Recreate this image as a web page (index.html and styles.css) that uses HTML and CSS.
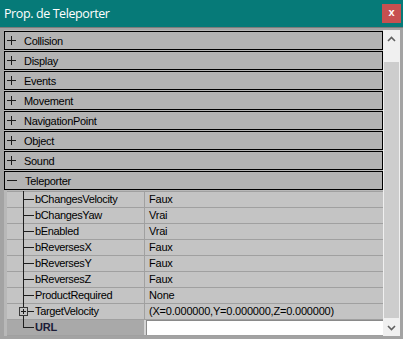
FILE: index.html
```html
<!DOCTYPE html>
<html>
<head>
<meta charset="utf-8">
<link rel="stylesheet" href="styles.css">
</head>
<body>
<div class="window">
  <div class="titlebar">
    <span class="title">Prop. de Teleporter</span>
    <div class="close">x</div>
  </div>
  <div class="frame">
    <div class="grid">
      <div class="cat"><svg class="pm" width="9" height="9" viewBox="0 0 9 9"><path d="M0 4.5H9M4.5 0V9" stroke="#1a1a1a" stroke-width="1"/></svg><span>Collision</span></div>
      <div class="cat"><svg class="pm" width="9" height="9" viewBox="0 0 9 9"><path d="M0 4.5H9M4.5 0V9" stroke="#1a1a1a" stroke-width="1"/></svg><span>Display</span></div>
      <div class="cat"><svg class="pm" width="9" height="9" viewBox="0 0 9 9"><path d="M0 4.5H9M4.5 0V9" stroke="#1a1a1a" stroke-width="1"/></svg><span>Events</span></div>
      <div class="cat"><svg class="pm" width="9" height="9" viewBox="0 0 9 9"><path d="M0 4.5H9M4.5 0V9" stroke="#1a1a1a" stroke-width="1"/></svg><span>Movement</span></div>
      <div class="cat"><svg class="pm" width="9" height="9" viewBox="0 0 9 9"><path d="M0 4.5H9M4.5 0V9" stroke="#1a1a1a" stroke-width="1"/></svg><span>NavigationPoint</span></div>
      <div class="cat"><svg class="pm" width="9" height="9" viewBox="0 0 9 9"><path d="M0 4.5H9M4.5 0V9" stroke="#1a1a1a" stroke-width="1"/></svg><span>Object</span></div>
      <div class="cat"><svg class="pm" width="9" height="9" viewBox="0 0 9 9"><path d="M0 4.5H9M4.5 0V9" stroke="#1a1a1a" stroke-width="1"/></svg><span>Sound</span></div>
      <div class="cat"><svg class="pm" width="10" height="9" viewBox="0 0 10 9"><path d="M0 4.5H10" stroke="#1a1a1a" stroke-width="1"/></svg><span>Teleporter</span></div>
      <div class="props">
        <div class="row"><div class="name">bChangesVelocity</div><div class="val">Faux</div></div>
        <div class="row"><div class="name">bChangesYaw</div><div class="val">Vrai</div></div>
        <div class="row"><div class="name">bEnabled</div><div class="val">Vrai</div></div>
        <div class="row"><div class="name">bReversesX</div><div class="val">Faux</div></div>
        <div class="row"><div class="name">bReversesY</div><div class="val">Faux</div></div>
        <div class="row"><div class="name">bReversesZ</div><div class="val">Faux</div></div>
        <div class="row"><div class="name">ProductRequired</div><div class="val">None</div></div>
        <div class="row"><div class="name expandable"><svg class="exp" width="9" height="9" viewBox="0 0 9 9"><rect x="0.5" y="0.5" width="8" height="8" fill="#c4c4c4" stroke="#3a3a3a"/><path d="M2 4.5H7M4.5 2V7" stroke="#1a1a1a"/></svg>TargetVelocity</div><div class="val">(X=0.000000,Y=0.000000,Z=0.000000)</div></div>
        <div class="row last sel"><div class="name">URL</div><div class="val edit"></div></div>
      </div>
    </div>
    <div class="scrollbar">
      <div class="sbtn"><svg width="9" height="6" viewBox="0 0 9 6"><path d="M1 5L4.5 1.5L8 5" fill="none" stroke="#606060" stroke-width="1.6"/></svg></div>
      <div class="sgap"></div>
      <div class="thumb"></div>
      <div class="sbtn"><svg width="9" height="6" viewBox="0 0 9 6"><path d="M1 1L4.5 4.5L8 1" fill="none" stroke="#606060" stroke-width="1.6"/></svg></div>
    </div>
  </div>
</div>
</body>
</html>
```
FILE: styles.css
```css
* { box-sizing: border-box; margin: 0; padding: 0; }
body { width: 403px; height: 339px; overflow: hidden; font-family: "Liberation Sans", Arial, sans-serif; font-size: 11px; color: #000; }
.window { width: 403px; height: 339px; display: flex; flex-direction: column; }
.titlebar { height: 27px; background: #067a78; display: flex; align-items: flex-start; justify-content: space-between; padding-left: 4px; }
.title { color: #fff; font-family: "Open Sans", sans-serif; font-size: 12.5px; letter-spacing: -0.4px; line-height: 27px; }
.close { width: 19px; height: 19px; margin-top: 4px; margin-right: 2px; background: #c75050; color: #fff; font: bold 11px/17px "Liberation Sans", Arial, sans-serif; text-align: center; }
.frame { flex: 1; display: flex; background: #a3a3a3; border-top: 1px solid #7c7c7c; padding: 2px 3px 3px 4px; }
.grid { width: 379px; padding-top: 1px; background: #b8b8b8; display: flex; flex-direction: column; }
.cat { height: 19px; margin-bottom: 1px; border: 1px solid #000; background: #b4b4b4; display: flex; align-items: center; letter-spacing: -0.3px; }
.cat .pm { margin-left: 2px; margin-right: 8px; flex: none; }
.props { margin-left: 3px; border-bottom: 1px solid #a0a0a0; background: #c4c4c4; }
.row { height: 16px; border-top: 1px solid #a0a0a0; display: flex; }
.name { width: 137px; position: relative; padding-left: 28px; line-height: 15px; letter-spacing: -0.35px; white-space: nowrap; }
.name::before { content: ""; position: absolute; left: 16px; top: -1px; bottom: 0; width: 1px; background: #1e1e1e; }
.name::after { content: ""; position: absolute; left: 16px; top: 7px; width: 11px; height: 1px; background: #1e1e1e; }
.row.last .name::before { bottom: 7px; }
.exp { position: absolute; left: 12px; top: 3px; z-index: 1; }
.name.expandable::after { left: 21px; width: 6px; }
.val { flex: 1; border-left: 1px solid #a0a0a0; padding-left: 4px; line-height: 15px; letter-spacing: -0.2px; white-space: nowrap; }
.sel .name { background: #a9a9a9; font-weight: bold; color: #1c1c38; letter-spacing: -0.2px; }
.val.edit { background: #fff; margin-left: 0; border-left: 2px solid #d4d4d4; box-shadow: inset 1px 1px #8a8a8a; }
.scrollbar { width: 17px; background: #f0f0f0; display: flex; flex-direction: column; }
.sbtn { height: 17px; display: flex; align-items: center; justify-content: center; flex: none; }
.sgap { height: 15px; flex: none; }
.thumb { flex: 1; margin: 0 1px 1px 1px; background: #cdcdcd; }
```
